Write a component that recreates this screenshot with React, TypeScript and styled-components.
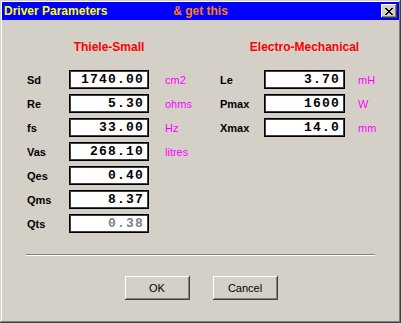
import React from "react";
import styled, { createGlobalStyle } from "styled-components";

const Global = createGlobalStyle`
  html, body { margin: 0; padding: 0; background: #d4d0c8; }
  * { box-sizing: border-box; }
`;

const Window = styled.div`
  width: 401px;
  height: 323px;
  padding: 2px;
  background: #d4d0c8;
  box-shadow: inset -1px -1px #404040, inset 1px 1px #d4d0c8,
    inset -2px -2px #808080, inset 2px 2px #ffffff;
  display: flex;
  flex-direction: column;
  font-family: "Liberation Sans", Arial, sans-serif;
`;

const TitleBar = styled.div`
  height: 18px;
  background: #0000ff;
  display: grid;
  grid-template-columns: 1fr auto 1fr;
  align-items: center;
  padding: 0 2px 0 2px;
`;

const Title = styled.span`
  color: #ffff00;
  font-weight: bold;
  font-size: 12px;
  white-space: nowrap;
`;

const Tagline = styled.span`
  color: #ff8000;
  font-weight: bold;
  font-size: 12px;
  white-space: nowrap;
`;

const CloseButton = styled.div`
  justify-self: end;
  width: 16px;
  height: 14px;
  background: #d4d0c8;
  box-shadow: inset -1px -1px #404040, inset 1px 1px #ffffff,
    inset -2px -2px #808080;
  display: flex;
  align-items: center;
  justify-content: center;
`;

const Form = styled.div`
  display: grid;
  grid-template-columns: 42px 80px 71px 44px 81px auto;
  row-gap: 5px;
  align-items: center;
  padding-left: 25px;
  margin-top: 20px;
`;

const Heading = styled.div<{ $col: number }>`
  grid-column: ${(p) => p.$col};
  grid-row: 1;
  justify-self: center;
  white-space: nowrap;
  color: #ff0000;
  font-weight: bold;
  font-size: 12px;
  line-height: 14px;
  margin-bottom: 11px;
`;

const Label = styled.div<{ $col: number; $row: number }>`
  grid-column: ${(p) => p.$col};
  grid-row: ${(p) => p.$row};
  font-weight: bold;
  font-size: 11px;
  color: #000;
`;

const ValueBox = styled.div<{ $col: number; $row: number; $disabled?: boolean }>`
  grid-column: ${(p) => p.$col};
  grid-row: ${(p) => p.$row};
  height: 19px;
  background: #ffffff;
  border: 1px solid #000;
  box-shadow: inset 1px 1px #404040, inset -1px -1px #404040;
  display: flex;
  align-items: center;
  justify-content: flex-end;
  padding-right: 4px;
  font-family: "Liberation Mono", "Courier New", monospace;
  font-weight: bold;
  font-size: 13px;
  letter-spacing: 1.2px;
  color: ${(p) => (p.$disabled ? "#808080" : "#000")};
`;

const Unit = styled.div<{ $col: number; $row: number; $pad: number }>`
  grid-column: ${(p) => p.$col};
  grid-row: ${(p) => p.$row};
  padding-left: ${(p) => p.$pad}px;
  color: #ff00ff;
  font-size: 11px;
`;

const Separator = styled.div`
  margin: 21px 24px 0 24px;
  height: 2px;
  border-top: 1px solid #808080;
  border-bottom: 1px solid #ffffff;
`;

const ButtonRow = styled.div`
  display: flex;
  justify-content: center;
  gap: 23px;
  margin-top: 20px;
  padding-left: 1px;
`;

const Button = styled.div`
  width: 65px;
  height: 24px;
  background: #d4d0c8;
  box-shadow: inset -1px -1px #404040, inset 1px 1px #ffffff,
    inset -2px -2px #808080;
  display: flex;
  align-items: center;
  justify-content: center;
  font-size: 11px;
  color: #000;
`;

const left = [
  { label: "Sd", value: "1740.00", unit: "cm2" },
  { label: "Re", value: "5.30", unit: "ohms" },
  { label: "fs", value: "33.00", unit: "Hz" },
  { label: "Vas", value: "268.10", unit: "litres" },
  { label: "Qes", value: "0.40" },
  { label: "Qms", value: "8.37" },
  { label: "Qts", value: "0.38", disabled: true },
];

const right = [
  { label: "Le", value: "3.70", unit: "mH" },
  { label: "Pmax", value: "1600", unit: "W" },
  { label: "Xmax", value: "14.0", unit: "mm" },
];

export default function App() {
  return (
    <>
      <Global />
      <Window>
        <TitleBar>
          <Title>Driver Parameters</Title>
          <Tagline>&amp; get this</Tagline>
          <CloseButton>
            <svg width="8" height="7" viewBox="0 0 8 7" shapeRendering="crispEdges">
              <path
                d="M0 0h2v1h-2zM6 0h2v1h-2zM1 1h2v1h-2zM5 1h2v1h-2zM2 2h4v1h-4zM3 3h2v1h-2zM2 4h4v1h-4zM1 5h2v1h-2zM5 5h2v1h-2zM0 6h2v1h-2zM6 6h2v1h-2z"
                fill="#000"
              />
            </svg>
          </CloseButton>
        </TitleBar>
        <Form>
          <Heading $col={2}>Thiele-Small</Heading>
          <Heading $col={5}>Electro-Mechanical</Heading>
          {left.map((r, i) => (
            <React.Fragment key={r.label}>
              <Label $col={1} $row={i + 2}>{r.label}</Label>
              <ValueBox $col={2} $row={i + 2} $disabled={r.disabled}>
                {r.value}
              </ValueBox>
              {r.unit && (
                <Unit $col={3} $row={i + 2} $pad={16}>
                  {r.unit}
                </Unit>
              )}
            </React.Fragment>
          ))}
          {right.map((r, i) => (
            <React.Fragment key={r.label}>
              <Label $col={4} $row={i + 2}>{r.label}</Label>
              <ValueBox $col={5} $row={i + 2}>{r.value}</ValueBox>
              <Unit $col={6} $row={i + 2} $pad={13}>
                {r.unit}
              </Unit>
            </React.Fragment>
          ))}
        </Form>
        <Separator />
        <ButtonRow>
          <Button>OK</Button>
          <Button>Cancel</Button>
        </ButtonRow>
      </Window>
    </>
  );
}
